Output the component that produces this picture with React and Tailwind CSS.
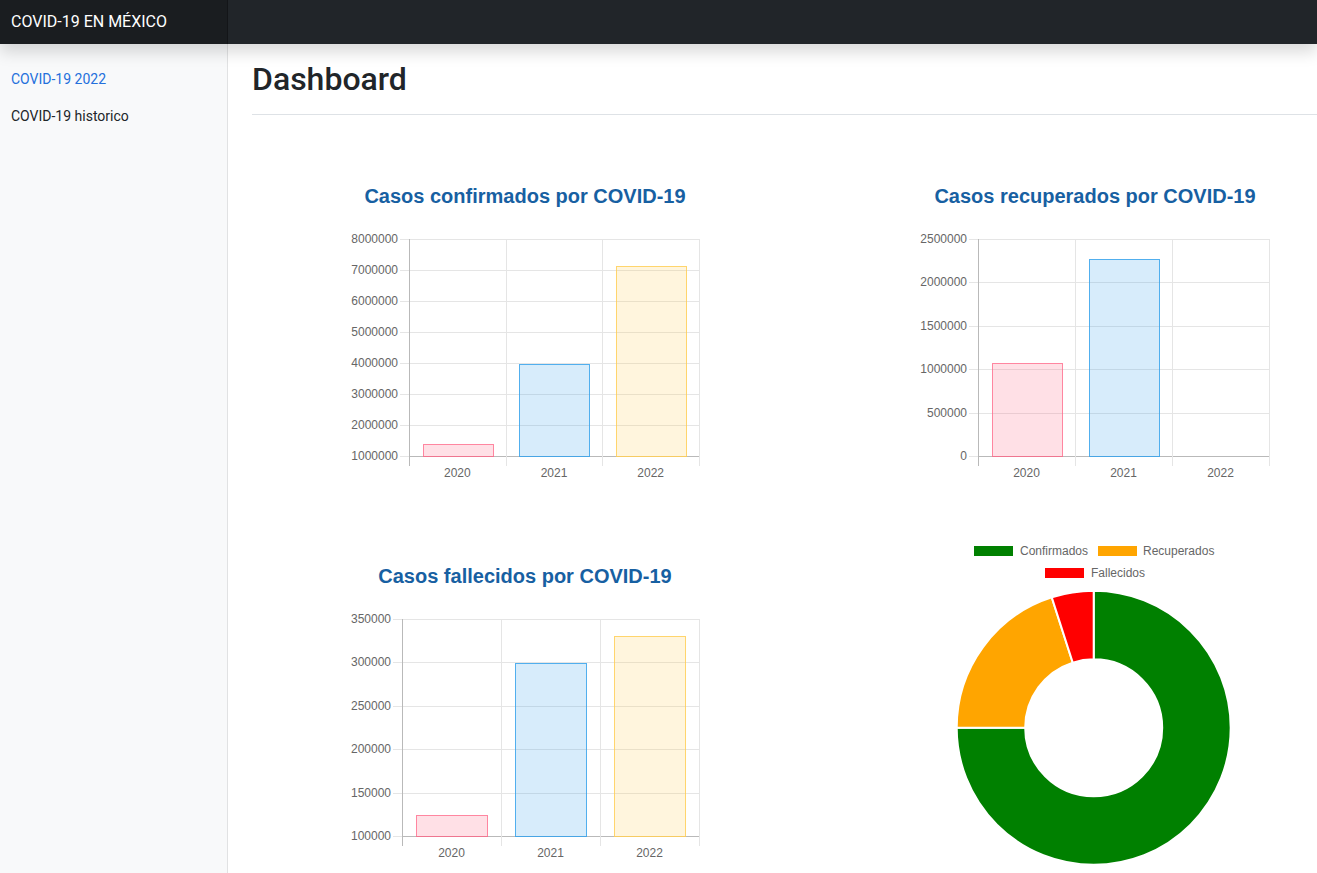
import React from "react";

const gridColor = "#e5e5e5";
const axisColor = "#b9b9b9";

const BarChart = ({ axisX, min, max, step, bars }) => {
    const top = 11;
    const bottom = 228;
    const right = 349;
    const steps = Math.round((max - min) / step);
    const ticks = Array.from({ length: steps + 1 }, (_, i) => min + i * step);
    const yOf = (v) => bottom - ((v - min) / (max - min)) * (bottom - top);
    const catW = (right - axisX) / 3;
    const barW = catW * 0.72;
    const colors = [
        ["rgba(255,99,132,0.2)", "rgba(255,99,132,0.75)"],
        ["rgba(54,162,235,0.2)", "rgba(54,162,235,0.85)"],
        ["rgba(255,206,86,0.2)", "rgba(255,206,86,0.85)"],
    ];
    return (
        <svg width="350" height="256" className="block" style={{ fontFamily: "'Liberation Sans', Arial, sans-serif" }}>
            {ticks.map((t) => (
                <g key={t}>
                    <line x1={axisX - 9} x2={right} y1={Math.round(yOf(t)) + 0.5} y2={Math.round(yOf(t)) + 0.5} stroke={t === min ? axisColor : gridColor} />
                    <line x1={axisX - 9} x2={axisX} y1={Math.round(yOf(t)) + 0.5} y2={Math.round(yOf(t)) + 0.5} stroke={gridColor} />
                    <text x={axisX - 11} y={yOf(t) + 4} textAnchor="end" fontSize="12" fill="#666">{t}</text>
                </g>
            ))}
            {[0, 1, 2, 3].map((i) => (
                <line key={i} x1={Math.round(axisX + i * catW) + 0.5} x2={Math.round(axisX + i * catW) + 0.5} y1={top} y2={bottom + 10} stroke={i === 0 ? axisColor : gridColor} />
            ))}
            {bars.map((v, i) => {
                if (v <= min) return null;
                const x = axisX + i * catW + (catW - barW) / 2;
                const y = yOf(v);
                return (
                    <rect key={i} x={Math.round(x) + 0.5} y={Math.round(y) + 0.5} width={Math.round(barW)} height={Math.round(bottom - y)} fill={colors[i][0]} stroke={colors[i][1]} />
                );
            })}
            {["2020", "2021", "2022"].map((l, i) => (
                <text key={l} x={axisX + i * catW + catW / 2} y={249} textAnchor="middle" fontSize="12" fill="#666">{l}</text>
            ))}
        </svg>
    );
};

const arc = (cx, cy, r, r0, a1, a2) => {
    const p = (rad, a) => [cx + rad * Math.sin(a), cy - rad * Math.cos(a)];
    const [x1, y1] = p(r, a1);
    const [x2, y2] = p(r, a2);
    const [x3, y3] = p(r0, a2);
    const [x4, y4] = p(r0, a1);
    const large = a2 - a1 > Math.PI ? 1 : 0;
    return `M${x1} ${y1} A${r} ${r} 0 ${large} 1 ${x2} ${y2} L${x3} ${y3} A${r0} ${r0} 0 ${large} 0 ${x4} ${y4} Z`;
};

const Doughnut = () => {
    const parts = [
        { label: "Confirmados", value: 75, color: "#008000" },
        { label: "Recuperados", value: 20.05, color: "#ffa500" },
        { label: "Fallecidos", value: 4.95, color: "#ff0000" },
    ];
    const total = parts.reduce((s, p) => s + p.value, 0);
    let acc = 0;
    const cx = 173.7;
    const cy = 187.8;
    return (
        <svg width="350" height="333" className="block" style={{ fontFamily: "'Liberation Sans', Arial, sans-serif" }}>
            <rect x="54" y="6" width="39" height="10" fill="#008000" />
            <text x="100" y="14.5" fontSize="12" fill="#666">Confirmados</text>
            <rect x="178" y="6" width="39" height="10" fill="#ffa500" />
            <text x="223" y="14.5" fontSize="12" fill="#666">Recuperados</text>
            <rect x="125" y="28" width="39" height="10" fill="#ff0000" />
            <text x="171" y="36.5" fontSize="12" fill="#666">Fallecidos</text>
            {parts.map((p) => {
                const a1 = (acc / total) * Math.PI * 2;
                acc += p.value;
                const a2 = (acc / total) * Math.PI * 2;
                return <path key={p.label} d={arc(cx, cy, 137, 68.5, a1, a2)} fill={p.color} stroke="#fff" strokeWidth="2" />;
            })}
        </svg>
    );
};

const ChartTitle = ({ children }) => (
    <h3 className="text-center text-[20px] leading-6 font-bold text-[#1760a2] h-6" style={{ fontFamily: "'Liberation Sans', Arial, sans-serif" }}>
        {children}
    </h3>
);

export default function App() {
    return (
        <div className="h-screen overflow-hidden flex flex-col bg-white text-[#212529]" style={{ fontFamily: "'Segoe UI', Roboto, 'Noto Sans', sans-serif" }}>
            <header className="relative z-10 h-11 shrink-0 flex bg-[#212529] shadow-[0_8px_16px_rgba(0,0,0,0.15)]">
                <div className="w-[228px] h-full flex items-center px-[11px] bg-[#1a1d20] text-white text-[16px] shadow-[inset_-1px_0_0_rgba(0,0,0,0.25)]">
                    COVID-19 EN MÉXICO
                </div>
            </header>
            <div className="flex flex-1 min-h-0">
                <nav className="w-[228px] shrink-0 bg-[#f8f9fa] border-r border-[#e1e2e3] pt-[17px] text-[14px]">
                    <a className="block px-[11px] py-2 leading-[21px] text-[#2470dc]">COVID-19 2022</a>
                    <a className="block px-[11px] py-2 leading-[21px] text-[#212529]">COVID-19 historico</a>
                </nav>
                <main className="flex-1 min-w-0 pl-6">
                    <div className="pt-4 pb-2 mb-[69px] border-b border-[#dee2e6]">
                        <h1 className="text-[32px] leading-[38px] font-medium mb-2">Dashboard</h1>
                    </div>
                    <div className="grid grid-cols-[350px_350px] gap-x-[220px] gap-y-[56px] pl-[98px]">
                        <div>
                            <ChartTitle>Casos confirmados por COVID-19</ChartTitle>
                            <div className="mt-5">
                                <BarChart axisX={59} min={1000000} max={8000000} step={1000000} bars={[1390000, 3970000, 7130000]} />
                            </div>
                        </div>
                        <div>
                            <ChartTitle>Casos recuperados por COVID-19</ChartTitle>
                            <div className="mt-5">
                                <BarChart axisX={58} min={0} max={2500000} step={500000} bars={[1068000, 2266000, 0]} />
                            </div>
                        </div>
                        <div className="pt-6">
                            <ChartTitle>Casos fallecidos por COVID-19</ChartTitle>
                            <div className="mt-5">
                                <BarChart axisX={52} min={100000} max={350000} step={50000} bars={[124500, 299000, 330000]} />
                            </div>
                        </div>
                        <div>
                            <Doughnut />
                        </div>
                    </div>
                </main>
            </div>
        </div>
    );
}
